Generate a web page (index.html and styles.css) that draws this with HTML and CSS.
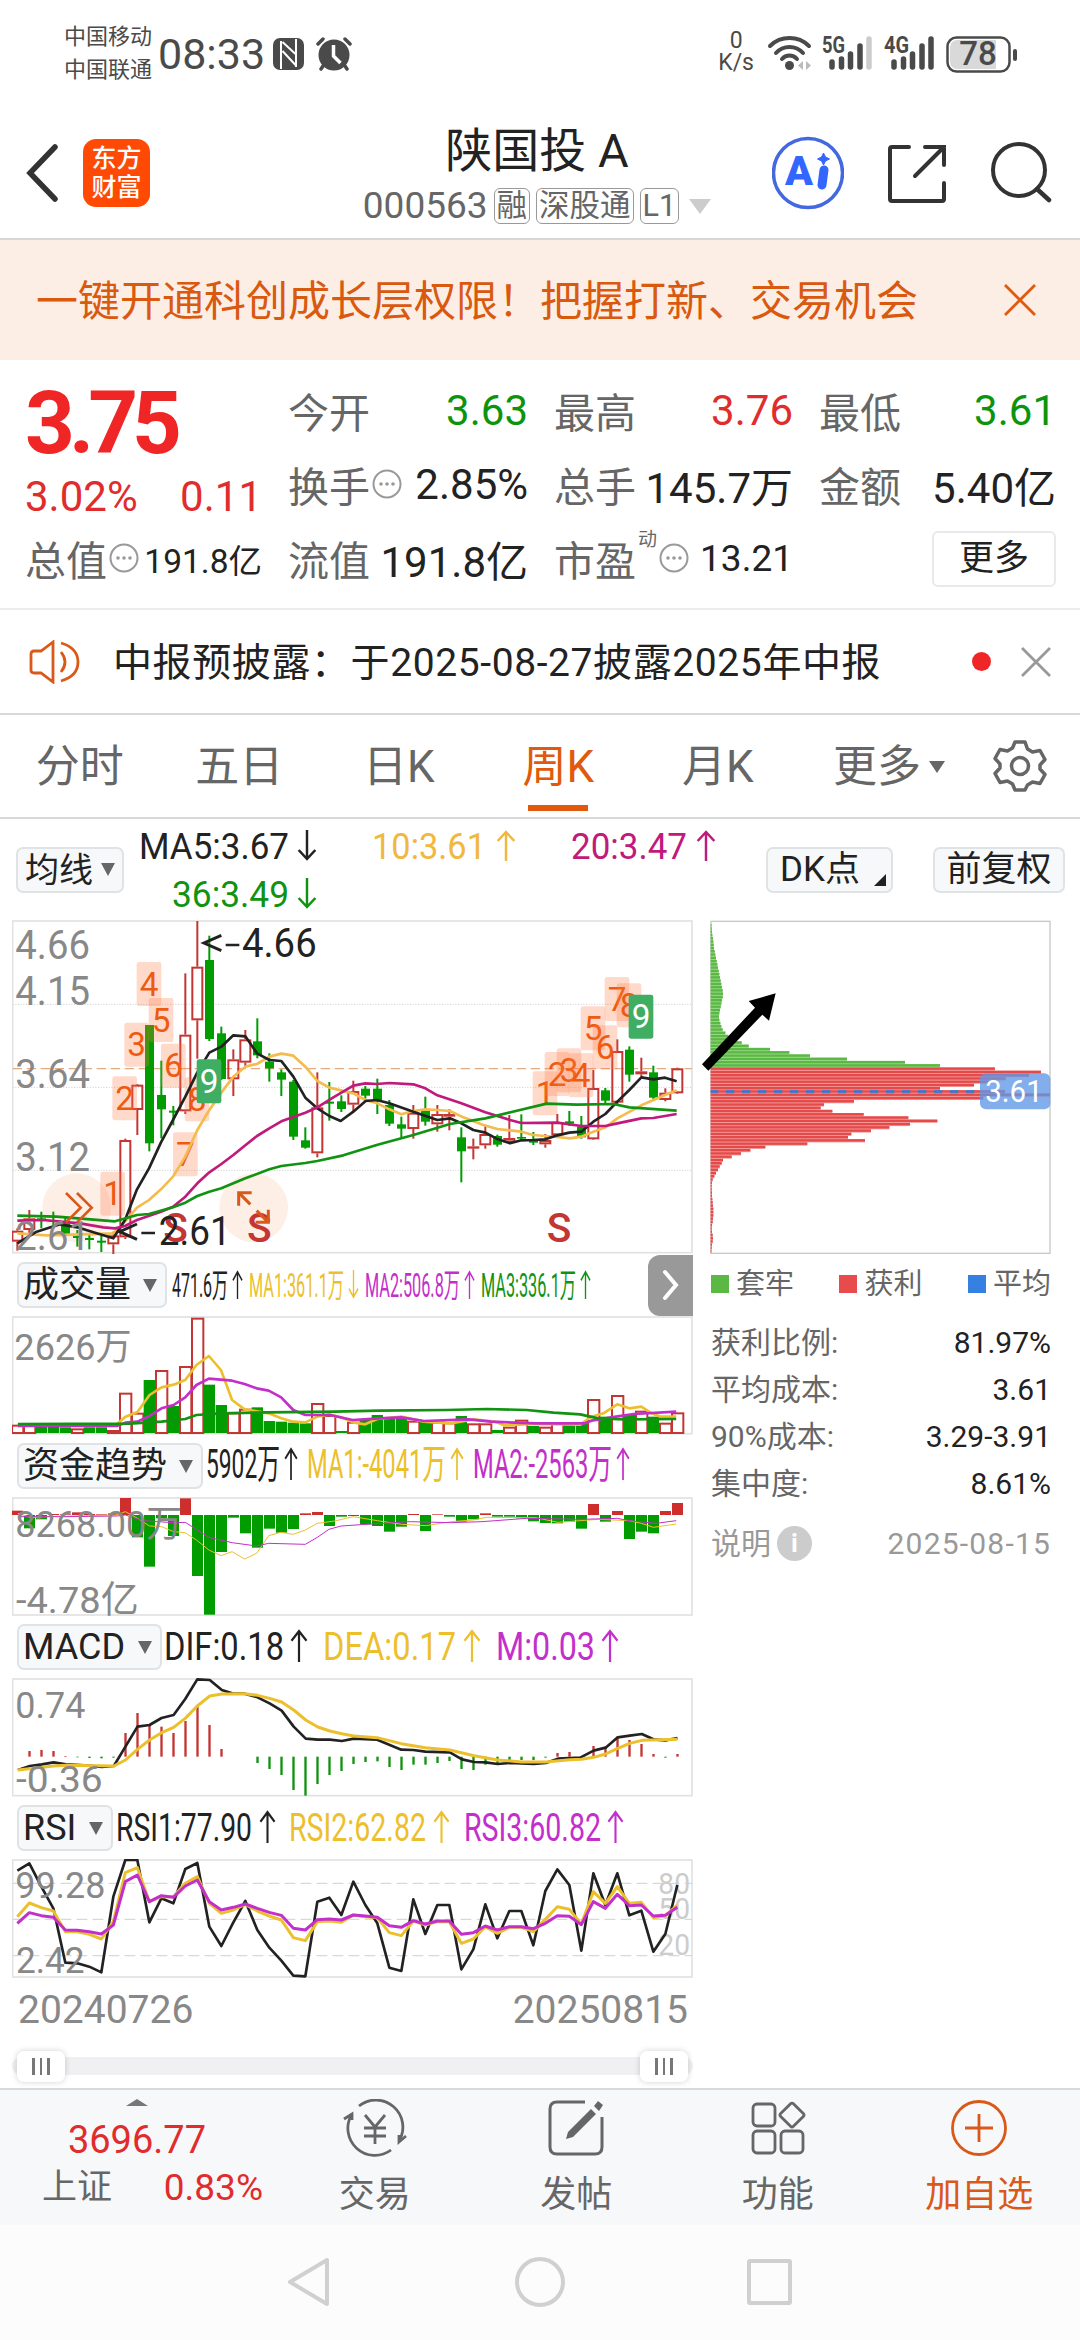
FILE: index.html
```html
<!DOCTYPE html>
<html lang="zh-CN">
<head>
    <meta charset="UTF-8">
    <meta name="viewport" content="width=device-width, initial-scale=1.0">
    <title>陕国投A 000563</title>
    <link rel="stylesheet" href="styles.css">
</head>
<body>
    <svg width="0" height="0" class="defs">
        <symbol id="up" viewBox="0 0 18 31" preserveAspectRatio="none"><path d="M9 31V2M1.500 11L9 2l7.500 9" fill="none" stroke="currentColor" stroke-width="2.200"/></symbol>
        <symbol id="down" viewBox="0 0 18 31" preserveAspectRatio="none"><path d="M9 0v29M1.500 20L9 29l7.500-9" fill="none" stroke="currentColor" stroke-width="2.200"/></symbol>
        <symbol id="more" viewBox="0 0 30 30"><circle cx="15" cy="15" r="13.500" fill="none" stroke="#999" stroke-width="2"/><g fill="#999"><circle cx="9" cy="15" r="1.800"/><circle cx="15" cy="15" r="1.800"/><circle cx="21" cy="15" r="1.800"/></g></symbol>
    </svg>

    <div class="status">
        <div class="carriers"><span>中国移动</span><span>中国联通</span></div>
        <span class="clock">08:33</span>
        <svg class="nfc" width="31" height="32" viewBox="0 0 31 32"><rect x="0" y="0" width="31" height="32" rx="7" fill="#4a4a4a"/><path d="M8 31V3M23 29V1M9.500 4l13 12M9.500 13l13 14" fill="none" stroke="#fff" stroke-width="2"/></svg>
        <svg class="alarm" width="36" height="34" viewBox="0 0 36 34"><circle cx="18" cy="18" r="15.500" fill="#4a4a4a"/><path d="M2 7l5-5M34 7l-5-5M7 29l-2 3M29 29l2 3" stroke="#4a4a4a" stroke-width="3.500" stroke-linecap="round"/><path d="M17.500 8v11l7 7" fill="none" stroke="#fff" stroke-width="3.500"/></svg>
        <div class="status-right">
            <div class="speed"><span>0</span><span>K/s</span></div>
            <svg width="46" height="36" viewBox="0 0 46 36"><g fill="none" stroke="#4a4a4a" stroke-width="4" stroke-linecap="round"><path d="M4 10a28 28 0 0 1 39 0"/><path d="M10 17a18 18 0 0 1 27 0"/><path d="M16 23a10 10 0 0 1 15 0"/></g><circle cx="23.500" cy="29.500" r="4.500" fill="#4a4a4a"/><path d="M37 25v9l-5-4.500zM40 25v9l5-4.500z" fill="#bbb"/></svg>
            <svg width="52" height="36" viewBox="0 0 52 36"><text x="0" y="17" class="net" textLength="23" lengthAdjust="spacingAndGlyphs">5G</text><path d="M10 31v-5M19.500 31v-8M28.500 31V18M38 31V10" stroke="#4a4a4a" stroke-width="5.500" stroke-linecap="round"/><path d="M47 31V3" stroke="#ccc" stroke-width="5.500" stroke-linecap="round"/></svg>
            <svg width="52" height="36" viewBox="0 0 52 36"><text x="0" y="17" class="net" textLength="25" lengthAdjust="spacingAndGlyphs">4G</text><path d="M10 31v-5M19.500 31v-8M28.500 31V18M38 31V10M47 31V3" stroke="#4a4a4a" stroke-width="5.500" stroke-linecap="round"/></svg>
            <svg width="73" height="37" viewBox="0 0 73 37"><rect x="1.500" y="1.500" width="62" height="34" rx="9" fill="#fff" stroke="#4a4a4a" stroke-width="2.500"/><path d="M11 4h39v29H11a7 7 0 0 1-7-7V11a7 7 0 0 1 7-7z" fill="#d9d9d9"/><rect x="67" y="13" width="4" height="12" rx="2" fill="#4a4a4a"/><text x="32" y="29" text-anchor="middle" class="batt">78</text></svg>
        </div>
    </div>

    <div class="header">
        <svg class="back" width="36" height="58" viewBox="0 0 36 58"><path d="M31 3L6 29l25 26" fill="none" stroke="#333" stroke-width="5.500" stroke-linecap="round"/></svg>
        <div class="logo"><span>东方</span><span>财富</span></div>
        <div class="title">
            <h1>陕国投 A</h1>
            <div class="code">000563 <i>融</i><i>深股通</i><i>L1</i><b></b></div>
        </div>
        <div class="actions">
            <svg width="72" height="74" viewBox="0 0 72 74"><circle cx="36" cy="37" r="34.500" fill="#fff" stroke="#4368e0" stroke-width="3.500"/><text x="13" y="49" class="ai" textLength="28" lengthAdjust="spacingAndGlyphs">A</text><path d="M52 34l-2 15" stroke="#3366ff" stroke-width="9" stroke-linecap="round"/><path d="M51.500 17l2 4 4 2-4 2-2 4-2-4-4-2 4-2z" fill="#3366ff" stroke="#3366ff"/></svg>
            <svg width="60" height="62" viewBox="0 0 60 62"><g fill="none" stroke="#333" stroke-width="4" stroke-linecap="round"><path d="M22 5H5q-2 0-2 2v50q0 2 2 2h50q2 0 2-2V41"/><path d="M38 5h19v18M57 5L28 34"/></g></svg>
            <svg width="62" height="64" viewBox="0 0 62 64"><circle cx="29" cy="29" r="26" fill="none" stroke="#333" stroke-width="4"/><path d="M47 48l12 11" stroke="#333" stroke-width="4.500" stroke-linecap="round"/></svg>
        </div>
    </div>

    <div class="banner">
        <span>一键开通科创成长层权限！把握打新、交易机会</span>
        <svg width="34" height="34" viewBox="0 0 34 34"><path d="M2 2l30 30M32 2L2 32" stroke="#e0590c" stroke-width="2.800"/></svg>
    </div>

    <div class="quote">
        <div class="price">
            <div class="last">3.75</div>
            <div class="change red"><span>3.02%</span><span>0.11</span></div>
        </div>
        <div class="cell"><label>今开</label><span class="green">3.63</span></div>
        <div class="cell"><label>最高</label><span class="red">3.76</span></div>
        <div class="cell"><label>最低</label><span class="green">3.61</span></div>
        <div class="cell"><label>换手</label><svg class="dots"><use href="#more"/></svg><span>2.85%</span></div>
        <div class="cell"><label>总手</label><span>145.7万</span></div>
        <div class="cell"><label>金额</label><span>5.40亿</span></div>
        <div class="cell"><label>总值</label><svg class="dots"><use href="#more"/></svg><span class="small">191.8亿</span></div>
        <div class="cell"><label>流值</label><span>191.8亿</span></div>
        <div class="cell"><label>市盈</label><sup>动</sup><svg class="dots"><use href="#more"/></svg><span class="mid">13.21</span></div>
        <div class="cell"><button class="more-btn">更多</button></div>
    </div>

    <div class="notice">
        <svg width="54" height="44" viewBox="0 0 54 44"><g fill="none" stroke="#d9591a" stroke-width="2.800"><path d="M24 2L12 11H5q-3 0-3 3v16q0 3 3 3h7l12 9z"/><path d="M32 12q8 10 0 20M32 3q17 5 17 19T32 41"/></g></svg>
        <p>中报预披露：于2025-08-27披露2025年中报</p>
        <span class="dot"></span>
        <svg width="30" height="30" viewBox="0 0 30 30"><path d="M1 1l28 28M29 1L1 29" stroke="#999" stroke-width="2.800"/></svg>
    </div>

    <div class="tabs">
        <span>分时</span><span>五日</span><span>日K</span><span class="active">周K</span><span>月K</span><span class="wide">更多<b></b></span>
        <svg width="54" height="54" viewBox="0 0 54 54"><path d="M22 3h10l2.500 7 5 3 7.500-1.500 5 9-5 5.500v4l5 5.500-5 9-7.500-1.500-5 3L32 51H22l-2.500-6-5-3L7 43.500l-5-9L7 29v-4l-5-5.500 5-9L14.500 12l5-3z" fill="none" stroke="#666" stroke-width="3.500" stroke-linejoin="round"/><circle cx="27" cy="27" r="8.500" fill="none" stroke="#666" stroke-width="3.500"/></svg>
    </div>

    <div class="ma-row">
        <button class="chip ma-btn">均线<b></b></button>
        <svg class="legend" id="maLegend" width="600" height="102" viewBox="124 818 600 102"></svg>
        <button class="chip dk-btn">DK点<em></em></button>
        <button class="chip fq-btn">前复权</button>
    </div>

    <div class="main">
        <div class="left">
            <svg id="price" width="683" height="334" viewBox="36 30 2049 1002"></svg>
            <div class="ind"><button class="chip" style="width:150px">成交量<b></b></button><svg class="legend" id="volLegend" width="481" height="62" viewBox="167 1254 481 62"></svg>
                <div class="expand"><svg width="20" height="40" viewBox="0 0 20 40"><path d="M4 7l11 13L4 33" fill="none" stroke="#fff" stroke-width="4" stroke-linecap="round"/></svg></div>
            </div>
            <svg id="volume" width="683" height="119" viewBox="36 198 2049 357"></svg>
            <div class="ind"><button class="chip" style="width:186px">资金趋势<b></b></button><svg class="legend" id="fundLegend" width="480" height="62" viewBox="203 1435 480 62"></svg></div>
            <svg id="fund" width="683" height="119" viewBox="36 741 2049 357"></svg>
            <div class="ind"><button class="chip" style="width:145px">MACD<b></b></button><svg class="legend" id="macdLegend" width="520" height="62" viewBox="162 1616 520 62"></svg></div>
            <svg id="macd" width="683" height="119" viewBox="36 174 2049 357"></svg>
            <div class="ind"><button class="chip" style="width:96px">RSI<b></b></button><svg class="legend" id="rsiLegend" width="570" height="62" viewBox="113 1797 570 62"></svg></div>
            <svg id="rsi" width="683" height="119" viewBox="36 717 2049 357"></svg>
            <div class="dates"><span>20240726</span><span>20250815</span></div>
            <div class="slider"><span><i></i><i></i><i></i></span><span><i></i><i></i><i></i></span></div>
        </div>
        <div class="right">
            <svg id="chips" width="342" height="334" viewBox="60 30 1026 1002"></svg>
            <div class="keys"><span><i style="background:#5cb845"></i>套牢</span><span><i style="background:#e84b4b"></i>获利</span><span><i style="background:#3580e0"></i>平均</span></div>
            <div class="row"><label>获利比例:</label><span>81.97%</span></div>
            <div class="row"><label>平均成本:</label><span>3.61</span></div>
            <div class="row"><label>90%成本:</label><span>3.29-3.91</span></div>
            <div class="row"><label>集中度:</label><span>8.61%</span></div>
            <div class="row note"><label>说明<b>i</b></label><span>2025-08-15</span></div>
        </div>
    </div>

    <div class="bottom">
        <div class="index">
            <b class="tri"></b>
            <div class="red num">3696.77</div>
            <div class="sub"><span>上证</span><span class="red">0.83%</span></div>
        </div>
        <div class="item">
            <svg width="66" height="58" viewBox="0 0 66 58"><g fill="none" stroke="#666" stroke-width="2.800"><path d="M17 7a27 27 0 0 1 40 35M49 51A27 27 0 0 1 10 15"/><path d="M2 20l8-5v6M64 37l-7 6v-7"/><path d="M23 16l10 12 10-12M33 28v17M22 29h22M22 37h22"/></g></svg>
            <span>交易</span>
        </div>
        <div class="item">
            <svg width="58" height="58" viewBox="0 0 58 58"><path d="M38 3H10q-7 0-7 7v38q0 7 7 7h38q7 0 7-7V18" fill="none" stroke="#666" stroke-width="3"/><path d="M44 10l5 5-23 23-7 2 2-7zM47 7l4-5 5 4-4 6z" fill="#666"/></svg>
            <span>发帖</span>
        </div>
        <div class="item">
            <svg width="56" height="56" viewBox="0 0 56 56"><g fill="none" stroke="#666" stroke-width="2.800"><rect x="3" y="4" width="22" height="22" rx="4"/><rect x="3" y="31" width="22" height="22" rx="4"/><rect x="31" y="31" width="22" height="22" rx="4"/><rect x="33" y="6" width="18" height="18" rx="2" transform="rotate(45 42 15)"/></g></svg>
            <span>功能</span>
        </div>
        <div class="item add">
            <svg width="58" height="58" viewBox="0 0 58 58"><g fill="none" stroke="#d9591a" stroke-width="2.800"><circle cx="29" cy="29" r="26.500"/><path d="M29 15v28M15 29h28"/></g></svg>
            <span>加自选</span>
        </div>
    </div>

    <div class="nav">
        <svg width="540" height="60" viewBox="0 0 540 60"><g fill="none" stroke="#d0d0d0" stroke-width="4" stroke-linejoin="round"><path d="M57 7v44L20 29z"/><circle cx="270" cy="29" r="23"/><rect x="479" y="8" width="41" height="42" rx="1"/></g></svg>
    </div>
    <script src="script.js"></script>
</body>
</html>
```

FILE: styles.css
```css
* {
    box-sizing: border-box;
}

body {
    width: 1080px;
    margin: 0;
    background: #fff;
    color: #222;
    font-family: Roboto, "Noto Sans CJK SC", sans-serif;
}

svg {
    display: block;
    flex: none;
}

svg text {
    font-family: Roboto, "Noto Sans CJK SC", sans-serif;
}

i, em {
    font-style: normal;
}

button {
    font: inherit;
    color: inherit;
    padding: 0;
}

.defs {
    position: absolute;
}

.red {
    color: #e02c2c !important;
}

.green {
    color: #0c940c !important;
}

/* status bar */
.status {
    height: 108px;
    display: flex;
    align-items: center;
    padding: 0 61px 0 64px;
    color: #4a4a4a;
}

.carriers {
    display: flex;
    flex-direction: column;
    font-size: 22px;
    line-height: 33px;
    width: 94px;
    padding-bottom: 2px;
}

.clock {
    font-size: 43px;
    width: 115px;
}

.alarm {
    margin-left: 12px;
}

.status-right {
    display: flex;
    align-items: center;
    margin-left: auto;
}

.speed {
    display: flex;
    flex-direction: column;
    text-align: center;
    font-size: 23px;
    line-height: 22px;
    margin-right: 12px;
    padding-bottom: 4px;
}

.status-right svg {
    margin-right: 10px;
}

.status-right svg:last-child {
    margin: 0;
}

.net {
    font-size: 23px;
    font-weight: bold;
    fill: #4a4a4a;
}

.batt {
    font-size: 33px;
    font-weight: 500;
    fill: #4a4a4a;
}

/* header */
.header {
    height: 132px;
    display: flex;
    align-items: center;
    border-bottom: 2px solid #d5d8da;
    padding: 0 28px 0 24px;
}

.logo {
    width: 67px;
    height: 68px;
    margin-left: 23px;
    background: #ff4a05;
    border-radius: 13px;
    color: #fff;
    font-size: 25px;
    font-weight: 500;
    line-height: 29px;
    display: flex;
    flex-direction: column;
    align-items: center;
    justify-content: center;
}

.title {
    width: 400px;
    margin-left: 187px;
    text-align: center;
}

.title h1 {
    font-size: 47px;
    font-weight: normal;
    line-height: 56px;
    margin: 5px 0 5px;
}

.code {
    display: flex;
    align-items: center;
    justify-content: center;
    gap: 6px;
    font-size: 37px;
    line-height: 44px;
    color: #666;
}

.code i {
    border: 1.5px solid #999;
    border-radius: 6px;
    font-size: 30.5px;
    line-height: 34px;
    padding: 0 2px;
}

.code b {
    border: 11px solid transparent;
    border-top: 15px solid #ccc;
    border-bottom: 0;
    margin-left: 4px;
}

.actions {
    display: flex;
    align-items: center;
    gap: 43px;
    margin-left: auto;
}

.ai {
    font-size: 41px;
    font-weight: 900;
    fill: #3366ff;
}

.banner {
    height: 120px;
    background: #fceee4;
    color: #d9590f;
    font-size: 42px;
    display: flex;
    align-items: center;
    justify-content: space-between;
    padding: 0 43px 0 36px;
}

.banner span {
    padding-bottom: 5px;
}

/* quote */
.quote {
    height: 250px;
    border-bottom: 2px solid #eceeee;
    padding: 16px 24px 11px 25px;
    display: grid;
    grid-template-columns: 237px 240px 239px 237px;
    grid-template-rows: repeat(3, 74px);
    column-gap: 26px;
}

.price {
    grid-row: 1 / 3;
}

.last {
    font-size: 87px;
    font-weight: 700;
    line-height: 92px;
    letter-spacing: -6px;
    color: #f02626;
    padding-top: 1px;
}

.change {
    display: flex;
    justify-content: space-between;
    font-size: 42px;
    line-height: 56px;
}

.cell {
    display: flex;
    align-items: center;
    font-size: 42px;
    white-space: nowrap;
    padding-bottom: 6px;
}

.cell label {
    color: #666;
    font-size: 41px;
}

.cell span, .more-btn {
    margin-left: auto;
}

.cell .small {
    font-size: 33.500px;
}

.cell .mid {
    font-size: 37px;
}

.cell sup {
    font-size: 19px;
    color: #666;
    margin: -38px 0 0 2px;
    line-height: 1;
}

.dots {
    width: 30px;
    height: 30px;
    margin-left: 2px;
}

.more-btn {
    width: 124px;
    height: 56px;
    background: #fff;
    border: 2px solid #e8e9ea;
    border-radius: 6px;
    font-size: 35px;
    line-height: 48px;
    margin-bottom: -2px;
}

.notice {
    height: 105px;
    border-bottom: 2px solid #d9d9d9;
    display: flex;
    align-items: center;
    padding: 0 29px 0 29px;
    font-size: 39px;
}

.notice p {
    margin: 0 0 0 30px;
    padding-bottom: 5px;
    letter-spacing: 0.6px;
    flex: 1;
}

.dot {
    width: 19px;
    height: 19px;
    border-radius: 50%;
    background: #f02626;
    margin-right: 30px;
}

/* period tabs */
.tabs {
    height: 104px;
    border-bottom: 2px solid #d9d9d9;
    display: flex;
    align-items: center;
    font-size: 44px;
    color: #666;
}

.tabs span {
    width: 159.5px;
    height: 102px;
    line-height: 104px;
    text-align: center;
}

.tabs .wide {
    width: 195px;
    padding-right: 12px;
}

.tabs b {
    display: inline-block;
    border: 8px solid transparent;
    border-top: 12px solid #666;
    border-bottom: 0;
    margin-left: 8px;
    vertical-align: 9px;
}

.tabs .active {
    color: #e0590c;
    background: linear-gradient(#e0590c, #e0590c) center 90px / 60px 6px no-repeat;
}

/* indicator rows */
.chip {
    height: 46px;
    background: #f7f8fa;
    border: 2px solid #e0e3e6;
    border-radius: 7px;
    font-size: 36px;
    line-height: 40px;
    padding: 0 8px 0 4px;
    display: flex;
    align-items: center;
    justify-content: space-between;
    flex: none;
    white-space: nowrap;
}

.chip b {
    border: 7.5px solid transparent;
    border-top: 13px solid #666;
    border-bottom: 0;
}

.ma-row {
    height: 101px;
    display: flex;
    align-items: center;
    padding-left: 16px;
}

.ma-btn {
    width: 108px;
    font-size: 34px;
    padding: 0 7px;
}

.dk-btn {
    width: 127px;
    margin-left: 42px;
    font-size: 35px;
    padding: 0 5px 0 12px;
}

.dk-btn em {
    border-left: 12px solid transparent;
    border-bottom: 12px solid #222;
    margin-top: 20px;
}

.fq-btn {
    width: 132px;
    margin-left: 40px;
    font-size: 35px;
    padding: 0;
    justify-content: center;
}

.main {
    display: flex;
    height: 1168px;
    padding-left: 12px;
}

.left {
    width: 683px;
}

.ind {
    height: 62px;
    display: flex;
    align-items: center;
    padding-left: 5px;
}

.expand {
    width: 45px;
    height: 61px;
    background: #999;
    border-radius: 12px 0 0 12px;
    display: flex;
    align-items: center;
    justify-content: center;
    flex: none;
}

.dates {
    display: flex;
    justify-content: space-between;
    padding: 0 7px 0 6px;
    height: 65px;
    line-height: 64px;
    font-size: 39px;
    color: #888;
}

.slider {
    height: 18px;
    width: 681px;
    margin-top: 14px;
    background: #f0f0f3;
    border-radius: 9px;
    display: flex;
    align-items: center;
    justify-content: space-between;
    padding: 0 5px;
}

.slider span {
    width: 48px;
    height: 31px;
    background: #fff;
    border-radius: 7px;
    box-shadow: 0 0 6px rgba(0, 0, 0, 0.18);
    display: flex;
    align-items: center;
    justify-content: center;
    gap: 5px;
}

.slider i {
    width: 2.5px;
    height: 17px;
    background: #777;
}

/* cost distribution */
.right {
    width: 342px;
    margin-left: 15px;
}

#chips {
    overflow: visible;
}

.keys {
    display: flex;
    justify-content: space-between;
    padding: 0 1px 0 1px;
    height: 65px;
    line-height: 56px;
    font-size: 29px;
    color: #666;
}

.keys span {
    display: flex;
    align-items: center;
    height: 59px;
}

.keys i {
    width: 18px;
    height: 18px;
    margin-right: 7px;
}

.row {
    display: flex;
    justify-content: space-between;
    height: 47px;
    line-height: 47px;
    font-size: 30px;
    padding: 0 1px 0 1px;
}

.row label {
    color: #666;
}

.note {
    margin-top: 13px;
}

.note, .note label {
    color: #999;
}

.note span {
    letter-spacing: 1.2px;
}

.note label {
    display: flex;
    align-items: center;
}

.note b {
    width: 35px;
    height: 35px;
    margin-left: 6px;
    border-radius: 50%;
    background: #ccc;
    color: #fff;
    text-align: center;
    line-height: 35px;
    font-size: 26px;
}

/* bottom bar */
.bottom {
    height: 137px;
    background: #f7f8fa;
    border-top: 2px solid #d9d9d9;
    display: grid;
    grid-template-columns: 274px repeat(4, 201.5px);
    color: #666;
}

.index {
    text-align: center;
    font-size: 38px;
    line-height: 46px;
}

.tri {
    display: block;
    width: 0;
    margin: 9px auto 0;
    border: 11px solid transparent;
    border-bottom: 7px solid #777;
    border-top: 0;
}

.num {
    margin-top: 11px;
}

.sub {
    display: flex;
    justify-content: space-between;
    padding: 0 11px 0 42px;
    font-size: 35px;
    line-height: 50px;
}

.sub .red {
    font-size: 37px;
}

.item {
    display: flex;
    flex-direction: column;
    align-items: center;
    font-size: 36px;
    line-height: 50px;
}

.item svg {
    height: 58px;
    margin: 9px 0 13px;
}

.add {
    color: #d9591a;
}

.nav {
    height: 115px;
    background: #fcfcfc;
    display: flex;
    align-items: center;
    justify-content: center;
}
```

FILE: script.js
```js
// Chart units are thirds of a pixel, one bar every 36 units
const RED = '#c43634', GREEN = '#009c00', BLACK = '#222', YELLOW = '#ecc02c', PURPLE = '#c32fca';
const barX = i => 52 + 36 * i;

function rect(x, y, w, h, fill, extra = '') {
    return `<rect x="${x}" y="${y}" width="${w}" height="${h}" fill="${fill}" ${extra}/>`;
}

function line(points, color, width, scale = 1) {
    const pts = points.trim().split(/\s+/).map(p => {
        const [x, y] = p.split(',');
        return (x * scale).toFixed(1) + ',' + y;
    });
    return `<polyline points="${pts.join(' ')}" fill="none" stroke="${color}" stroke-width="${width}" stroke-linejoin="round"/>`;
}

function text(x, y, str, size, color, len, extra = '') {
    const fit = len ? `textLength="${len}" lengthAdjust="spacingAndGlyphs"` : '';
    return `<text x="${x}" y="${y}" font-size="${size}" fill="${color}" ${fit} ${extra}>${str}</text>`;
}

function frame(top, bottom) {
    return rect(38, top, 2038, bottom - top, 'none', 'stroke="#e2e2e2" stroke-width="5"');
}

function draw(id, html) {
    document.getElementById(id).innerHTML = html;
}

// Weekly candles: colour, high, body top, body bottom, low
const candles = `r,955,962,995,1022 r,900,925,960,975 g,905,925,930,955 g,905,930,935,950 g,920,940,972,975
g,960,978,984,1010 g,975,984,990,1018 g,978,992,998,1026 r,965,976,1003,1032 r,686,690,982,987
r,522,524,600,675 g,345,345,700,724 g,452,555,598,685 g,588,602,608,646 r,190,374,604,612
r,33,170,331,446 g,77,150,387,393 g,350,370,507,510 r,418,448,508,558 r,360,388,458,470
g,325,394,436,445 g,430,455,475,515 g,478,487,509,558 g,510,515,680,690 g,652,691,713,716
r,487,592,730,742 g,516,575,581,632 g,556,574,597,606 r,512,543,584,604 g,528,536,557,566
g,506,536,570,612 g,570,585,641,648 g,620,643,656,685 r,585,608,657,686 g,560,603,635,647
r,585,612,643,665 r,598,612,620,661 g,652,682,724,817 r,686,709,715,748 r,648,672,706,716
g,674,678,704,710 r,615,684,697,702 g,613,681,686,690 g,666,690,698,705 r,672,690,703,713
r,612,636,676,680 g,603,634,641,648 g,618,650,682,686 r,480,534,688,690 g,534,541,572,580
r,388,423,578,582 g,409,419,494,515 r,443,484,493,500 g,467,487,563,568 r,535,548,570,574 r,473,475,550,552`;

function drawPrice() {
    let s = frame(33, 1028);
    s += '<circle cx="230" cy="893" r="103" fill="#fdeee6"/><circle cx="761" cy="893" r="103" fill="#fdeee6"/>';
    [283, 532, 781].forEach(y => {
        s += `<path d="M38 ${y}H2076" stroke="#ccc" stroke-width="3" stroke-dasharray="3 5"/>`;
    });
    s += '<path d="M38 476H2076" stroke="#e3ab80" stroke-width="4" stroke-dasharray="28 14"/>';

    candles.split(/\s+/).forEach((c, i) => {
        const [t, hi, a, b, lo] = c.split(',').map((v, n) => n ? +v : v);
        const x = barX(i);
        if (t === 'g') {
            s += rect(x - 3, hi, 6, lo - hi, GREEN) + rect(x - 13, a, 27, b - a, GREEN);
        } else {
            s += rect(x - 3, hi, 6, a - hi, RED) + rect(x - 3, b, 6, Math.max(lo - b, 0), RED);
            s += rect(x - 15, a + 3, 30, Math.max(b - a - 6, 1), 'none', `stroke="${RED}" stroke-width="6"`);
        }
    });

    // turning point counters
    const marks = [[301, 785], [337, 499], [373, 338], [410, 156], [446, 264], [483, 401], [519, 667], [554, 502], [590, 448],
        [1598, 484], [1634, 426], [1670, 415], [1706, 430], [1742, 289], [1778, 346], [1814, 201], [1850, 220], [1886, 254]];
    marks.forEach(([x, y], i) => {
        const n = i % 9 + 1;
        if (i === 8) return;
        s += rect(x, y, 74, 132, n === 9 ? '#3fad62' : '#ff7a45', `rx="7" ${n === 9 ? '' : 'opacity="0.28"'}`);
        s += text(x + 37, y + 101, n, 100, n === 9 ? '#fff' : '#ee5a10', 0, 'text-anchor="middle"');
    });

    s += line('52,970 140,976 340,970 375,935 411,893 447,870 483,838 519,800 556,740 592,660 628,600 664,548 700,500 736,470 771,462 808,440 844,431 880,437 916,470 952,513 988,533 1060,550 1096,570 1132,580 1168,598 1204,613 1240,603 1276,598 1312,600 1350,603 1390,622 1450,645 1492,657 1564,665 1600,675 1672,681 1710,685 1744,680 1780,665 1816,652 1852,625 1924,586 1995,555 2030,541', '#f4bb4d', 8);
    s += line('52,1000 110,965 180,943 232,952 290,970 340,985 375,930 411,838 447,775 483,697 519,630 556,560 592,487 628,428 664,410 700,376 736,379 771,430 808,450 844,453 880,500 916,563 952,595 988,618 1022,633 1060,605 1097,573 1130,570 1168,580 1240,605 1312,630 1350,625 1384,640 1420,660 1456,668 1490,686 1530,700 1564,691 1600,690 1636,688 1672,676 1708,668 1744,665 1780,635 1816,612 1852,575 1888,540 1924,502 1960,508 1995,503 2030,514', BLACK, 8);
    s += line('52,932 130,930 240,940 310,952 345,955 375,948 411,930 483,905 519,890 556,860 592,820 628,787 664,762 700,735 736,706 771,678 808,655 844,634 916,608 952,592 1000,562 1060,527 1096,520 1130,522 1168,519 1240,523 1276,535 1312,556 1384,580 1456,607 1530,630 1564,639 1672,638 1744,648 1816,648 1852,640 1924,625 1960,624 2030,612', '#bf1a7c', 8);
    s += line('52,917 170,920 345,934 411,915 447,912 519,892 556,878 592,858 628,845 664,835 736,805 808,778 844,768 916,759 952,753 1030,736 1130,705 1240,675 1350,642 1456,625 1560,600 1640,581 1730,584 1840,582 1888,592 2030,602', '#119311', 8);

    s += rect(590, 448, 74, 132, '#3fad62', 'rx="7"') + text(627, 549, 9, 100, '#fff', 0, 'text-anchor="middle"');
    [['4.66', 148], ['4.15', 285], ['3.64', 534], ['3.12', 782], ['2.61', 1020]].forEach(l => {
        s += text(46, l[1], l[0], 120, '#888', 224);
    });
    [527, 778, 1677].forEach(x => {
        s += text(x, 995, 'S', 122, RED, 0, 'text-anchor="middle" font-weight="500"');
    });
    s += '<path d="M664 76L612 99l52 23M411 942l-52 23 52 23" fill="none" stroke="#222" stroke-width="9"/>';
    s += '<path d="M677 105h41M424 969h41" stroke="#222" stroke-width="8"/>';
    s += text(726, 140, '4.66', 120, BLACK, 224) + text(476, 1005, '2.61', 120, BLACK, 216);
    s += '<path d="M198 849l44 44-44 44M231 849l44 44-44 44" fill="none" stroke="#d9591a" stroke-width="8"/>';
    s += '<path d="M755 848h-39v39M716 848l35 35M767 937h38v-38M805 937l-35-35" fill="none" stroke="#d9591a" stroke-width="9"/>';
    draw('price', s);
}

function drawVolume() {
    const tops = 'r524 r519 g530 g530 g532 r535 g532 g532 r540 r428 r488 g390 r360 g468 r348 r203 g404 g465 r487 r476 g472 g513 g515 g518 g520 r459 r495 g543 r515 g510 g495 g505 g505 r512 g512 r515 r517 g498 r520 r520 g540 r530 r509 g528 r530 r517 g520 g522 r447 g500 r435 g495 r482 g500 r518 r487';
    let s = frame(201, 551);
    tops.split(' ').forEach((v, i) => {
        const y = +v.slice(1), x = barX(i);
        s += v[0] === 'g' ? rect(x - 17, y, 34, 549 - y, GREEN)
            : rect(x - 16, y + 3, 34, Math.max(546 - y, 1), 'none', `stroke="${RED}" stroke-width="6"`);
    });
    s += line('40,528 262,522 281,500 308,486 335,435 362,412 389,404 415,390 440,345 468,318 495,360 520,450 548,478 602,490 630,505 657,515 684,517 711,500 737,493 764,502 791,517 818,523 845,507 899,500 950,515 1010,520 1060,508 1110,515 1130,526 1200,522 1300,524 1325,500 1352,490 1383,463 1410,475 1437,470 1460,490 1480,500 1515,500', YELLOW, 8, 1.339);
    s += line('40,528 262,528 281,518 308,515 335,498 362,475 389,465 415,442 440,405 468,386 520,392 548,402 575,415 602,422 630,442 657,480 684,495 740,495 790,510 850,505 899,502 950,513 1050,508 1100,515 1200,520 1310,520 1325,512 1380,500 1420,492 1515,485', PURPLE, 8, 1.339);
    s += line('40,522 290,521 362,515 415,507 440,495 495,490 600,487 750,485 850,482 1000,480 1090,477 1180,480 1240,488 1300,493 1340,505 1400,508 1515,507', '#119311', 8, 1.339);
    s += text(43, 331, '2626万', 112, '#888', 352);
    draw('volume', s);
}

function drawFund() {
    const ends = [782, 835, 808, 792, 793, 787, 792, 793, 790, 744, 862, 950, 805, 858, 745, 978, 1094, 906, 803, 850, 893, 836, 848, 837, 790, 786, 828, 800, 798, 823, 828, 845, 830, 792, 843, 793, 800, 815, 808, 790, 800, 800, 805, 814, 819, 820, 815, 836, 762, 815, 783, 867, 845, 850, 783, 759];
    let s = frame(744, 1095);
    ends.forEach((y, i) => {
        s += y < 795 ? rect(barX(i) - 16, y, 33, 795 - y, '#cf2f2c') : rect(barX(i) - 16, 795, 33, y - 795, GREEN);
    });
    s += line('40,790 70,803 100,800 200,797 260,795 281,785 308,805 335,828 362,830 389,845 415,848 440,870 468,900 495,917 520,905 548,927 575,910 602,857 630,847 657,853 684,840 711,820 750,813 791,800 845,812 900,823 955,827 1010,815 1060,810 1090,802 1200,803 1250,817 1300,812 1340,808 1410,812 1437,820 1464,832 1515,822', YELLOW, 3, 1.339);
    s += line('40,800 150,800 262,798 281,795 320,812 389,818 415,817 440,838 468,862 520,878 575,888 602,880 684,883 711,862 737,838 764,828 820,823 920,815 1010,818 1080,815 1180,805 1300,808 1383,805 1410,812 1470,820 1515,812', PURPLE, 3, 1.339);
    s += text(46, 861, '8268.00万', 112, '#888', 501) + text(48, 1088, '-4.78亿', 112, '#888', 368);
    draw('fund', s);
}

function drawMacd() {
    const ends = [410, 393, 390, 393, 408, 412, 414, 415, 413, 339, 279, 312, 320, 339, 303, 255, 315, 387, 410, 410, 429, 447, 465, 510, 527, 492, 465, 453, 432, 426, 424, 441, 450, 434, 434, 429, 423, 447, 450, 434, 434, 425, 420, 420, 413, 399, 396, 410, 378, 380, 350, 360, 372, 402, 413, 402];
    let s = frame(177, 527);
    ends.forEach((y, i) => {
        s += rect(barX(i) - 3, Math.min(y, 410), 7, Math.abs(y - 410), y < 410 ? RED : '#119311');
    });
    s += line('40,450 67,438 94,433 120,427 148,433 200,437 228,441 255,438 281,380 308,320 335,315 362,294 389,285 415,237 442,178 470,180 497,210 520,220 548,221 577,232 604,250 631,272 658,320 685,356 712,359 739,359 766,363 793,356 845,359 899,389 926,390 953,395 1008,397 1035,418 1062,426 1088,427 1115,432 1142,429 1196,432 1223,429 1250,416 1300,413 1330,392 1357,383 1384,352 1411,347 1438,342 1464,358 1491,361 1518,354', BLACK, 8, 1.339);
    s += line('40,450 120,438 148,436 255,438 281,420 308,388 335,360 362,338 389,322 415,295 442,258 470,228 497,222 548,221 577,226 604,235 631,246 658,270 685,300 712,321 739,333 766,341 793,348 845,353 899,371 953,383 1008,390 1062,407 1115,420 1169,426 1223,426 1276,419 1303,418 1330,412 1357,402 1384,385 1411,370 1438,361 1518,358', YELLOW, 9, 1.339);
    s += text(46, 293, '0.74', 110, '#888', 210) + text(48, 515, '-0.36', 110, '#888', 260);
    draw('macd', s);
}

function drawRsi() {
    const rsi1 = [752, 730, 800, 865, 1028, 1030, 1040, 1057, 830, 720, 720, 907, 835, 850, 747, 729, 920, 978, 907, 843, 930, 983, 1022, 1067, 1069, 845, 833, 885, 785, 855, 910, 1043, 1053, 838, 942, 855, 855, 1048, 988, 853, 955, 873, 873, 976, 813, 748, 795, 992, 760, 855, 760, 886, 872, 995, 942, 795];
    const rsi2 = [890, 849, 863, 873, 935, 935, 943, 957, 905, 758, 743, 845, 830, 830, 790, 770, 850, 880, 870, 853, 873, 888, 900, 953, 962, 905, 903, 907, 885, 890, 893, 938, 947, 903, 915, 905, 905, 970, 957, 920, 940, 922, 922, 935, 898, 860, 868, 912, 815, 850, 800, 850, 847, 893, 887, 855];
    const rsi3 = [910, 878, 887, 892, 930, 931, 935, 942, 915, 785, 765, 845, 827, 832, 798, 780, 845, 870, 862, 852, 865, 877, 886, 925, 930, 899, 897, 900, 885, 888, 892, 917, 922, 902, 912, 903, 903, 943, 938, 918, 930, 920, 920, 926, 910, 887, 889, 914, 845, 865, 823, 857, 855, 888, 886, 862];
    const path = a => a.map((y, i) => barX(i) + ',' + y).join(' ');
    let s = frame(720, 1071);
    [790, 898, 1007].forEach(y => {
        s += `<path d="M38 ${y}H2076" stroke="#d8d8d8" stroke-width="4" stroke-dasharray="32 16"/>`;
    });
    s += text(1975, 822, '80', 88, '#ccc', 95) + text(1975, 897, '50', 88, '#ccc', 95) + text(1975, 1006, '20', 88, '#ccc', 95);
    s += line(path(rsi1), BLACK, 8) + line(path(rsi2), YELLOW, 9) + line(path(rsi3), PURPLE, 9);
    s += text(46, 835, '99.28', 110, '#888', 270) + text(48, 1058, '2.42', 110, '#888', 206);
    draw('rsi', s);
}

function drawChips() {
    // right edge of every price level
    const green = [64, 65, 66, 67, 69, 70, 71, 72, 74, 76, 78, 80, 82, 84, 86, 88, 90, 92, 94, 96, 98, 99, 98, 96, 94, 92, 90, 88, 87, 88, 91, 94, 98, 106, 115, 135, 155, 176, 240, 298, 360, 471, 645, 750];
    const red = [915, 1053, 1017, 947, 905, 852, 750, 945, 1080, 880, 492, 402, 392, 427, 521, 655, 742, 660, 598, 543, 484, 474, 525, 352, 226, 181, 153, 125, 99, 95, 89, 84, 78, 73, 68, 66, 65, 65, 66, 66, 67, 68, 69, 70, 70, 70, 69, 68, 66, 65, 66, 68, 69, 68, 66, 65, 64];
    let s = rect(63, 34, 1017, 996, 'none', 'stroke="#c8c8c8" stroke-width="4"');
    green.concat(red).forEach((x, i) => {
        const y = 42 + 9.78 * i, top = i < green.length;
        s += rect(62, y, x - 62, 9.8, top ? '#96d786' : '#f49a9a') + rect(62, y, x - 62, 7.2, top ? '#5cb845' : '#e44a4a');
    });
    s += '<path d="M62 545H870" stroke="#4f74c4" stroke-width="10" stroke-dasharray="25 23" stroke-dashoffset="2"/>';
    s += rect(870, 490, 211, 108, '#5f97e6', 'rx="18" opacity="0.78"') + text(886, 576, '3.61', 92, '#fff', 172);
    s += '<path d="M36 463L195 293l-19-20 81-23-20 82-20-18L55 482z" fill="#000"/>';
    draw('chips', s);
}

// items: x, baseline, text, width, arrow x, arrow, colour
function drawLegend(id, size, arrowWidth, arrowHeight, items) {
    draw(id, items.map(([x, y, str, w, ax, dir, color]) =>
        text(x, y, str, size, color, w) +
        `<use href="#${dir}" x="${ax}" y="${y + 2 - arrowHeight}" width="${arrowWidth}" height="${arrowHeight}" color="${color}"/>`).join(''));
}

drawPrice();
drawVolume();
drawFund();
drawMacd();
drawRsi();
drawChips();
drawLegend('maLegend', 36, 20, 31, [
    [139, 858, 'MA5:3.67', 150, 297, 'down', BLACK],
    [372, 858, '10:3.61', 114, 496, 'up', '#f0b840'],
    [571, 858, '20:3.47', 116, 696, 'up', '#bf1a7c'],
    [172, 906, '36:3.49', 117, 297, 'down', '#119311']]);
drawLegend('volLegend', 33, 11, 29, [
    [172, 1297, '471.6万', 56, 232, 'up', BLACK],
    [249, 1297, 'MA1:361.1万', 95, 348, 'down', YELLOW],
    [365, 1297, 'MA2:506.8万', 95, 464, 'up', PURPLE],
    [481, 1297, 'MA3:336.1万', 95, 580, 'up', '#119311']]);
drawLegend('fundLegend', 40, 14, 33, [
    [206, 1478, '5902万', 74, 284, 'up', BLACK],
    [307, 1478, 'MA1:-4041万', 139, 450, 'up', YELLOW],
    [473, 1478, 'MA2:-2563万', 139, 616, 'up', PURPLE]]);
drawLegend('macdLegend', 39, 18, 33, [
    [164, 1660, 'DIF:0.18', 120, 290, 'up', BLACK],
    [323, 1660, 'DEA:0.17', 133, 463, 'up', YELLOW],
    [496, 1660, 'M:0.03', 99, 601, 'up', PURPLE]]);
drawLegend('rsiLegend', 39, 17, 33, [
    [116, 1841, 'RSI1:77.90', 136, 259, 'up', BLACK],
    [289, 1841, 'RSI2:62.82', 137, 433, 'up', YELLOW],
    [464, 1841, 'RSI3:60.82', 137, 607, 'up', PURPLE]]);
```
